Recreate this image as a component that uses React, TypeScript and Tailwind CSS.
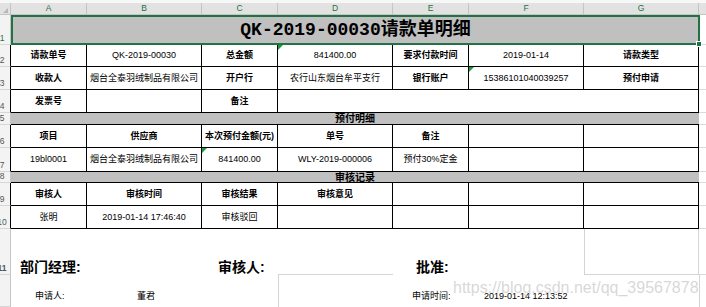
import React from 'react';
import clsx from 'clsx';

const S = 'w-[76px]';
const L = 'w-[115px]';

const cols: [string, string][] = [
  ['A', S],
  ['B', L],
  ['C', S],
  ['D', L],
  ['E', S],
  ['F', L],
  ['G', L],
];

function RowHead({ n, active, black }: { n?: string; active?: boolean; black?: boolean }) {
  return (
    <div
      className={clsx(
        'w-[11px] shrink-0 overflow-hidden flex items-end bg-[#f3f3f3] border-b border-b-[#d6d6d6] border-r',
        black ? 'border-r-black' : 'border-r-[#c4c4c4]'
      )}
    >
      <span
        className={clsx(
          'w-[20px] shrink-0 ml-[-8px] text-center text-[8.5px] leading-[10px] pb-[1px]',
          active ? 'text-[#217346]' : 'text-[#555]'
        )}
      >
        {n}
      </span>
    </div>
  );
}

const Tail = () => <div className="flex-1 border-b border-[#dadada]" />;

function Mark() {
  return (
    <div className="absolute top-0 left-0 w-0 h-0 border-t-[5px] border-t-[#1d9a3a] border-r-[5px] border-r-transparent" />
  );
}

function Cell({
  w,
  bold,
  mark,
  children,
}: {
  w: string;
  bold?: boolean;
  mark?: boolean;
  children?: React.ReactNode;
}) {
  return (
    <div
      className={clsx(
        w,
        'shrink-0 relative flex items-center justify-center whitespace-nowrap border-r border-b border-black',
        bold && 'font-bold'
      )}
    >
      {mark && <Mark />}
      {children}
    </div>
  );
}

function Band({ n, h, title }: { n: string; h: string; title: string }) {
  return (
    <div className={clsx('flex', h)}>
      <RowHead n={n} />
      <div className="w-[688px] shrink-0 bg-[#c0c0c0] border-b border-black flex items-center justify-center font-bold text-[10px]">
        {title}
      </div>
      <Tail />
    </div>
  );
}

export default function App() {
  return (
    <div className="w-[706px] h-[307px] overflow-hidden bg-white text-black relative font-['Liberation_Sans','Noto_Sans_CJK_SC',sans-serif] text-[9px] leading-[11px]">
      {/* column header */}
      <div className="h-[3px] bg-[#f7f7f7]" />
      <div className="flex h-[12px] bg-[#e2e2e2] border-b border-[#c4c4c4]">
        <div className="w-[11px] shrink-0 border-r border-[#c4c4c4] relative">
          <div className="absolute right-[2px] bottom-[1px] w-0 h-0 border-l-[5px] border-l-transparent border-b-[5px] border-b-[#b8b8b8]" />
        </div>
        {cols.map(([l, w]) => (
          <div
            key={l}
            className={clsx(w, 'shrink-0 border-r border-[#c4c4c4] flex items-center justify-center text-[#217346] text-[8.5px]')}
          >
            {l}
          </div>
        ))}
        <div className="flex-1" />
      </div>

      {/* row 1 title */}
      <div className="flex h-[30px]">
        <RowHead n="1" active />
        <div className="w-[689px] shrink-0 relative border-2 border-[#217346] bg-[#c0c0c0] flex items-center justify-center font-['Liberation_Mono','Noto_Sans_CJK_SC',monospace] text-[18px] font-bold leading-[22px]">
          QK-2019-00030请款单明细
          <div className="absolute z-10 right-[-4px] bottom-[-4px] w-[6px] h-[6px] bg-[#217346] border border-white" />
        </div>
        <div className="flex-1 border-b border-[#dadada]" />
      </div>

      <div className="flex h-[22px]">
        <RowHead n="2" black />
        <Cell w={S} bold>请款单号</Cell>
        <Cell w={L}>QK-2019-00030</Cell>
        <Cell w={S} bold>总金额</Cell>
        <Cell w={L} mark>841400.00</Cell>
        <Cell w={S} bold>要求付款时间</Cell>
        <Cell w={L}>2019-01-14</Cell>
        <Cell w={L} bold>请款类型</Cell>
        <Tail />
      </div>

      <div className="flex h-[23px]">
        <RowHead n="3" black />
        <Cell w={S} bold>收款人</Cell>
        <Cell w={L}>烟台全泰羽绒制品有限公司</Cell>
        <Cell w={S} bold>开户行</Cell>
        <Cell w={L}>农行山东烟台牟平支行</Cell>
        <Cell w={S} bold>银行账户</Cell>
        <Cell w={L} mark>15386101040039257</Cell>
        <Cell w={L} bold>预付申请</Cell>
        <Tail />
      </div>

      <div className="flex h-[23px]">
        <RowHead n="4" black />
        <Cell w={S} bold>发票号</Cell>
        <Cell w={L} />
        <Cell w={S} bold>备注</Cell>
        <Cell w="w-[421px]" />
        <Tail />
      </div>

      <Band n="5" h="h-[12px]" title="预付明细" />

      <div className="flex h-[23px]">
        <RowHead n="6" black />
        <Cell w={S} bold>项目</Cell>
        <Cell w={L} bold>供应商</Cell>
        <Cell w={S} bold>本次预付金额(元)</Cell>
        <Cell w={L} bold>单号</Cell>
        <Cell w={S} bold>备注</Cell>
        <Cell w={L} />
        <Cell w={L} />
        <Tail />
      </div>

      <div className="flex h-[24px]">
        <RowHead n="7" black />
        <Cell w={S}>19bl0001</Cell>
        <Cell w={L}>烟台全泰羽绒制品有限公司</Cell>
        <Cell w={S} mark>841400.00</Cell>
        <Cell w={L}>WLY-2019-000006</Cell>
        <Cell w={S}>预付30%定金</Cell>
        <Cell w={L} />
        <Cell w={L} />
        <Tail />
      </div>

      <Band n="8" h="h-[11px]" title="审核记录" />

      <div className="flex h-[23px]">
        <RowHead n="9" black />
        <Cell w={S} bold>审核人</Cell>
        <Cell w={L} bold>审核时间</Cell>
        <Cell w={S} bold>审核结果</Cell>
        <Cell w={L} bold>审核意见</Cell>
        <Cell w={S} />
        <Cell w={L} />
        <Cell w={L} />
        <Tail />
      </div>

      <div className="flex h-[23px]">
        <RowHead n="10" black />
        <Cell w={S}>张明</Cell>
        <Cell w={L}>2019-01-14 17:46:40</Cell>
        <Cell w={S}>审核驳回</Cell>
        <Cell w={L} />
        <Cell w={S} />
        <Cell w={L} />
        <Cell w={L} />
        <Tail />
      </div>

      {/* signatures */}
      <div className="flex h-[46px] text-[14px] leading-[16px] font-bold">
        <RowHead n="11" />
        <div className="w-[267px] shrink-0 flex items-start pt-[30px]">
          <span className="ml-[9px] w-[198px] shrink-0">部门经理:</span>
          <span>审核人:</span>
        </div>
        <div className="w-[115px] shrink-0 border-b border-[#d4d4d4]" />
        <div className="w-[191px] shrink-0 pt-[30px] pl-[23px]">批准:</div>
        <div className="w-[115px] shrink-0 border-l border-r border-b border-[#d4d4d4]" />
        <Tail />
      </div>

      <div className="flex h-[32px]">
        <RowHead />
        <div className="w-[267px] shrink-0 flex items-start pt-[16px]">
          <span className="ml-[24px] w-[102px] shrink-0">申请人:</span>
          <span>董君</span>
        </div>
        <div className="w-[115px] shrink-0 border-l border-[#d4d4d4]" />
        <div className="w-[306px] shrink-0 flex items-start pt-[16px] whitespace-nowrap">
          <span className="ml-[19px] w-[72px] shrink-0">申请时间:</span>
          <span>2019-01-14 12:13:52</span>
        </div>
        <div className="flex-1 border-l border-[#d4d4d4]" />
      </div>

      <div className="absolute left-[453px] top-[279px] text-[16px] leading-[18px] text-[#bdbdbd]/60 whitespace-nowrap">
        https://blog.csdn.net/qq_39567878
      </div>
    </div>
  );
}
